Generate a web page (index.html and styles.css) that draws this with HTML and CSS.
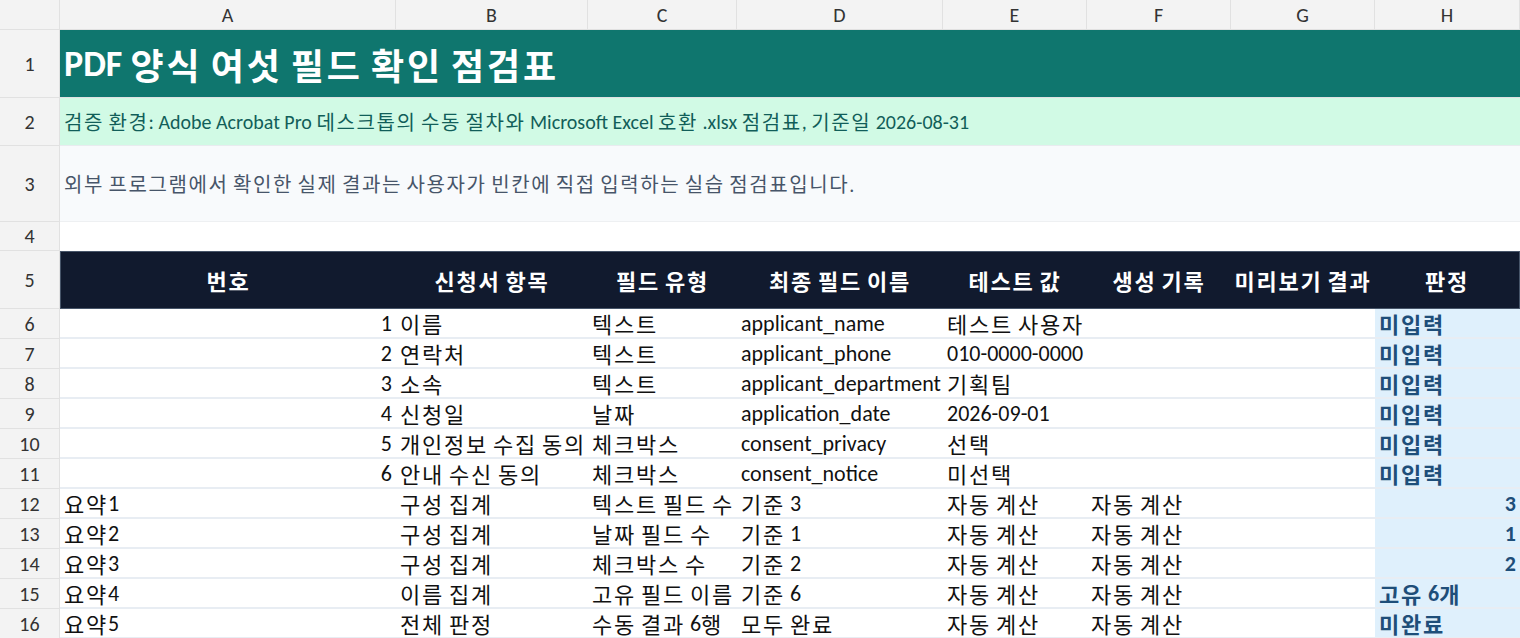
FILE: index.html
```html
<!DOCTYPE html>
<html lang="ko">
<head>
<meta charset="utf-8">
<link rel="stylesheet" href="styles.css">
</head>
<body>
<div class="sheet">
  <div class="corner"></div>
  <div class="colhead">A</div><div class="colhead">B</div><div class="colhead">C</div><div class="colhead">D</div><div class="colhead">E</div><div class="colhead">F</div><div class="colhead">G</div><div class="colhead">H</div>

  <div class="rowhead">1</div>
  <div class="title">PDF&nbsp;<span class="ko">양식 여섯 필드 확인 점검표</span></div>

  <div class="rowhead">2</div>
  <div class="env"><span class="ko">검증 환경</span>: Adobe Acrobat Pro <span class="ko">데스크톱의 수동 절차와</span> Microsoft Excel <span class="ko">호환</span> .xlsx <span class="ko">점검표</span>, <span class="ko">기준일</span> 2026-08-31</div>

  <div class="rowhead">3</div>
  <div class="note ko">외부 프로그램에서 확인한 실제 결과는 사용자가 빈칸에 직접 입력하는 실습 점검표입니다.</div>

  <div class="rowhead">4</div>
  <div class="blank"></div>

  <div class="rowhead">5</div>
  <div class="hdr first">번호</div><div class="hdr">신청서 항목</div><div class="hdr">필드 유형</div><div class="hdr">최종 필드 이름</div><div class="hdr">테스트 값</div><div class="hdr">생성 기록</div><div class="hdr">미리보기 결과</div><div class="hdr last">판정</div>

  <div class="rowhead">6</div>
  <div class="c num">1</div><div class="c ko">이름</div><div class="c ko">텍스트</div><div class="c">applicant_name</div><div class="c ko">테스트 사용자</div><div class="c"></div><div class="c"></div><div class="c judge ko">미입력</div>

  <div class="rowhead">7</div>
  <div class="c num">2</div><div class="c ko">연락처</div><div class="c ko">텍스트</div><div class="c">applicant_phone</div><div class="c">010-0000-0000</div><div class="c"></div><div class="c"></div><div class="c judge ko">미입력</div>

  <div class="rowhead">8</div>
  <div class="c num">3</div><div class="c ko">소속</div><div class="c ko">텍스트</div><div class="c">applicant_department</div><div class="c ko">기획팀</div><div class="c"></div><div class="c"></div><div class="c judge ko">미입력</div>

  <div class="rowhead">9</div>
  <div class="c num">4</div><div class="c ko">신청일</div><div class="c ko">날짜</div><div class="c">application_date</div><div class="c">2026-09-01</div><div class="c"></div><div class="c"></div><div class="c judge ko">미입력</div>

  <div class="rowhead">10</div>
  <div class="c num">5</div><div class="c ko">개인정보 수집 동의</div><div class="c ko">체크박스</div><div class="c">consent_privacy</div><div class="c ko">선택</div><div class="c"></div><div class="c"></div><div class="c judge ko">미입력</div>

  <div class="rowhead">11</div>
  <div class="c num">6</div><div class="c ko">안내 수신 동의</div><div class="c ko">체크박스</div><div class="c">consent_notice</div><div class="c ko">미선택</div><div class="c"></div><div class="c"></div><div class="c judge ko">미입력</div>

  <div class="rowhead">12</div>
  <div class="c"><span class="ko">요약</span>1</div><div class="c ko">구성 집계</div><div class="c ko">텍스트 필드 수</div><div class="c"><span class="ko">기준</span> 3</div><div class="c ko">자동 계산</div><div class="c ko">자동 계산</div><div class="c"></div><div class="c judge right">3</div>

  <div class="rowhead">13</div>
  <div class="c"><span class="ko">요약</span>2</div><div class="c ko">구성 집계</div><div class="c ko">날짜 필드 수</div><div class="c"><span class="ko">기준</span> 1</div><div class="c ko">자동 계산</div><div class="c ko">자동 계산</div><div class="c"></div><div class="c judge right">1</div>

  <div class="rowhead">14</div>
  <div class="c"><span class="ko">요약</span>3</div><div class="c ko">구성 집계</div><div class="c ko">체크박스 수</div><div class="c"><span class="ko">기준</span> 2</div><div class="c ko">자동 계산</div><div class="c ko">자동 계산</div><div class="c"></div><div class="c judge right">2</div>

  <div class="rowhead">15</div>
  <div class="c"><span class="ko">요약</span>4</div><div class="c ko">이름 집계</div><div class="c ko">고유 필드 이름</div><div class="c"><span class="ko">기준</span> 6</div><div class="c ko">자동 계산</div><div class="c ko">자동 계산</div><div class="c"></div><div class="c judge"><span class="ko">고유</span> 6<span class="ko">개</span></div>

  <div class="rowhead">16</div>
  <div class="c"><span class="ko">요약</span>5</div><div class="c ko">전체 판정</div><div class="c"><span class="ko">수동 결과</span> 6<span class="ko">행</span></div><div class="c ko">모두 완료</div><div class="c ko">자동 계산</div><div class="c ko">자동 계산</div><div class="c"></div><div class="c judge ko">미완료</div>
</div>
</body>
</html>
```

FILE: styles.css
```css
* { box-sizing: border-box; }
html, body { margin: 0; padding: 0; background: #ffffff; }
body {
  width: 1520px;
  height: 638px;
  overflow: hidden;
  font-family: "Carlito", "Noto Sans CJK KR", sans-serif;
}
.ko {
  letter-spacing: 0.08em;
  word-spacing: -0.08em;
}
.sheet {
  display: grid;
  grid-template-columns: 60px 336px 192px 149px 206px 144px 144px 144px 145px;
  grid-template-rows: 30px 68px 48px 76px 29px 58px repeat(11, 30px);
}
.corner, .colhead, .rowhead {
  background: #f3f3f3;
  color: #333333;
  font-family: "Carlito", "Liberation Sans", sans-serif;
  font-size: 20px;
  display: flex;
  align-items: center;
  justify-content: center;
  border-right: 1px solid #e1e1e1;
  border-bottom: 1px solid #e1e1e1;
}
.title {
  grid-column: span 8;
  background: #0f766e;
  color: #ffffff;
  font-weight: 700;
  font-size: 36px;
  display: flex;
  align-items: center;
  padding-left: 4px;
  white-space: nowrap;
  border-bottom: 1px solid #e1e1e1;
}
.env {
  grid-column: span 8;
  background: #d1fae5;
  color: #115e59;
  font-size: 20px;
  display: flex;
  align-items: center;
  padding-left: 4px;
  white-space: pre;
  border-bottom: 1px solid #e8ecef;
}
.note {
  grid-column: span 8;
  background: #f8fafc;
  color: #475569;
  font-size: 20px;
  display: flex;
  align-items: center;
  padding-left: 4px;
  white-space: nowrap;
  border-bottom: 1px solid #eef0f2;
}
.blank { grid-column: span 8; background: #ffffff; }
.hdr {
  background: #111a2e;
  color: #ffffff;
  font-weight: 700;
  font-size: 22px;
  letter-spacing: 0.08em;
  word-spacing: -0.08em;
  display: flex;
  align-items: center;
  justify-content: center;
  white-space: nowrap;
  border-top: 1px solid #475569;
  border-bottom: 1px solid #475569;
}
.hdr.first { border-left: 1px solid #475569; }
.hdr.last { border-right: 1px solid #475569; }
.c {
  font-size: 22px;
  color: #111111;
  display: flex;
  align-items: center;
  padding: 0 4px;
  white-space: pre;
  border-bottom: 2px solid #e8edf3;
}
.c.num { justify-content: flex-end; }
.c.judge {
  background: #dff0fc;
  color: #1e4e79;
  font-weight: 700;
}
.c.judge.right { justify-content: flex-end; }
```
